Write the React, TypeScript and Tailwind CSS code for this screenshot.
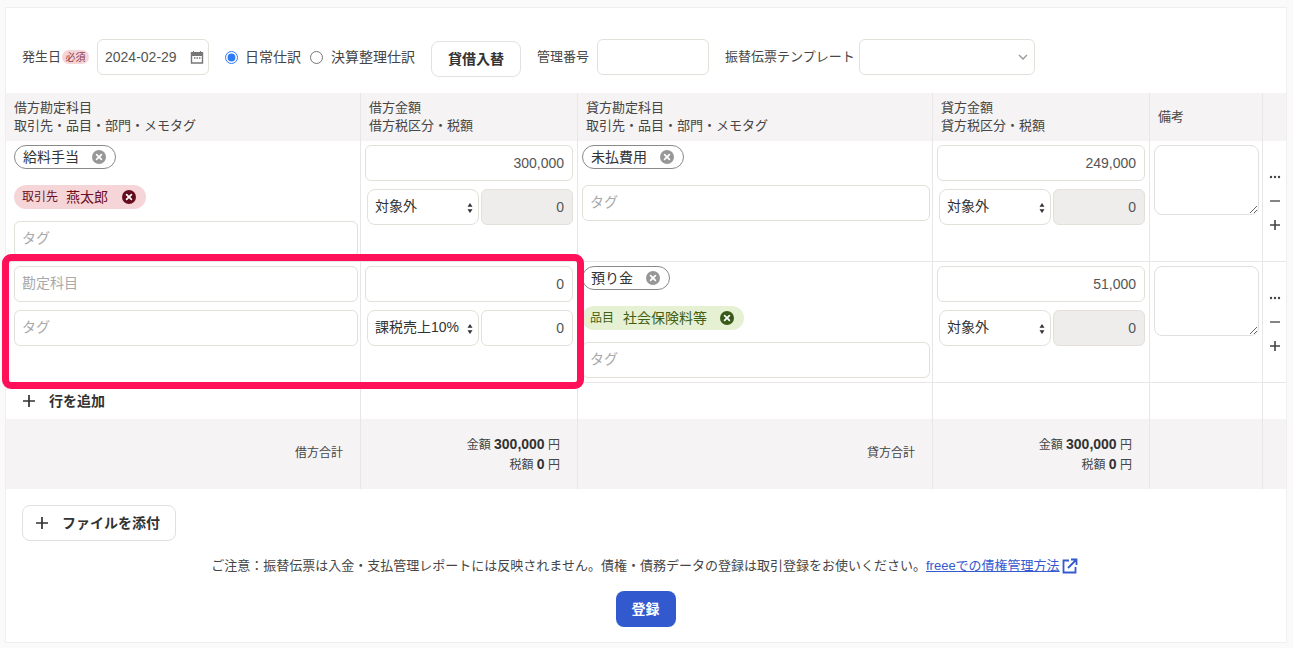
import React from "react";

const FONT = '"Liberation Sans", "Noto Sans CJK JP", sans-serif';

const inputCls =
  "h-9 rounded-md border border-[#e3e0d9] bg-white pl-[7px] pr-2 text-[14px] text-[#555] outline-none placeholder:text-[#a9a9a9]";
// Japanese placeholders sit a pixel higher than the digits
const tagCls = `${inputCls} pb-[2px]`;

function ClearIcon({ circle }: { circle: string }) {
  return (
    <svg width="14" height="14" viewBox="0 0 14 14" className="shrink-0">
      <circle cx="7" cy="7" r="7" fill={circle} />
      <path d="M4.6 4.6l4.8 4.8M9.4 4.6l-4.8 4.8" stroke="#fff" strokeWidth="1.7" strokeLinecap="round" />
    </svg>
  );
}

function Chip({ label, width }: { label: string; width: string }) {
  return (
    <div className={`flex h-6 items-center rounded-full border border-[#8a8a8a] bg-white pl-2 pr-[9px] text-[14px] text-[#323232] ${width}`}>
      <span>{label}</span>
      <span className="ml-auto">
        <ClearIcon circle="#979797" />
      </span>
    </div>
  );
}

function PartnerTag() {
  return (
    <div className="flex h-6 w-[132px] items-center rounded-full bg-[#f6d5d9] pl-2 pr-[10px] text-[#6c1022]">
      <span className="text-[12px]">取引先</span>
      <span className="ml-2 text-[14px]">燕太郎</span>
      <span className="ml-auto">
        <ClearIcon circle="#640d1e" />
      </span>
    </div>
  );
}

function ItemTag() {
  return (
    <div className="flex h-6 w-[162px] items-center rounded-full bg-[#e6f0d3] pl-2 pr-[10px] text-[#3f6014]">
      <span className="text-[12px]">品目</span>
      <span className="ml-[9px] text-[14px]">社会保険料等</span>
      <span className="ml-auto">
        <ClearIcon circle="#38591a" />
      </span>
    </div>
  );
}

function TaxSelect({ value }: { value: string }) {
  return (
    <div className="relative">
      <select
        defaultValue={value}
        className="h-9 w-[112px] appearance-none rounded-lg border border-[#e3e0d9] bg-white pb-[2px] pl-[7px] text-[14px] text-[#323232] outline-none"
      >
        <option>{value}</option>
      </select>
      <svg width="6" height="10" viewBox="0 0 6 10" className="pointer-events-none absolute right-[6px] top-[14px]">
        <path d="M3 0l2.5 3.8h-5zM3 10L.5 6.2h5z" fill="#333" />
      </svg>
    </div>
  );
}

function AmountInput({ value }: { value: string }) {
  return <input readOnly value={value} className={`${inputCls} w-[208px] text-right`} />;
}

function TaxRow({ label, tax, disabled }: { label: string; tax: string; disabled?: boolean }) {
  return (
    <div className="flex gap-[2px] pl-[2px]">
      <TaxSelect value={label} />
      <input
        readOnly
        value={tax}
        className={`h-9 w-[92px] rounded-md border border-[#e3e0d9] px-2 text-right text-[14px] text-[#555] outline-none ${
          disabled ? "bg-[#eeedeb]" : "bg-white"
        }`}
      />
    </div>
  );
}

function RowActions() {
  return (
    <div className="flex h-full flex-col items-center pt-[30px]">
      <svg width="12" height="12" viewBox="0 0 12 12">
        <circle cx="2" cy="6" r="1.2" fill="#444" />
        <circle cx="6" cy="6" r="1.2" fill="#444" />
        <circle cx="10" cy="6" r="1.2" fill="#444" />
      </svg>
      <svg width="12" height="12" viewBox="0 0 12 12" className="mt-3">
        <path d="M1 6h10" stroke="#666" strokeWidth="1.6" />
      </svg>
      <svg width="12" height="12" viewBox="0 0 12 12" className="mt-3">
        <path d="M1 6h10M6 1v10" stroke="#444" strokeWidth="1.6" />
      </svg>
    </div>
  );
}

function Plus() {
  return (
    <svg width="14" height="14" viewBox="0 0 14 14" className="shrink-0">
      <path d="M1 7h12M7 1v12" stroke="#323232" strokeWidth="1.7" />
    </svg>
  );
}

function Total({ amount, tax }: { amount: string; tax: string }) {
  return (
    <div className="flex h-full flex-col items-end justify-center gap-[3px] pr-[17px] text-[12px] leading-4 text-[#464646]">
      <span>
        金額 <b className="text-[14px] text-[#323232]">{amount}</b> 円
      </span>
      <span>
        税額 <b className="text-[14px] text-[#323232]">{tax}</b> 円
      </span>
    </div>
  );
}

const col = "border-r border-[#e8e6e6]";
const gridCls = "grid grid-cols-[355px_217px_355px_217px_113px_23px]";

export default function App() {
  return (
    <div className="relative min-h-[648px] bg-[#fafafa] pl-[5px] pr-[6px] pt-[7px]" style={{ fontFamily: FONT }}>
      <div className="h-[636px] border border-[#efefef] bg-white">
        {/* Top form */}
        <div className="flex h-[85px] items-start pl-[16px] pt-[31px] text-[13px] text-[#464646]">
          <div className="flex h-9 items-center">
            <span>発生日</span>
            <span className="ml-[1px] flex h-[14px] w-[27px] items-center justify-center rounded-full bg-[#f6d5d9] text-[10px] text-[#8c3a4a]">
              必須
            </span>
          </div>
          <div className="relative ml-2">
            <input readOnly value="2024-02-29" className={`${inputCls} w-[112px]`} />
            <svg width="14" height="14" viewBox="0 0 14 14" className="absolute right-[5px] top-[11px]">
              <path d="M1.5 3h11v10h-11z" fill="none" stroke="#777" strokeWidth="1.4" />
              <path d="M1.5 2.5h11v3h-11zM3.5 1v2M10.5 1v2" fill="#777" stroke="#777" />
              <path d="M4 8h1.5M6.5 8h1.5M9 8h1.5" stroke="#777" strokeWidth="1.5" />
            </svg>
          </div>
          <label className="ml-4 flex h-9 items-center gap-[7px] text-[14px]">
            <input type="radio" name="kind" defaultChecked className="h-[13px] w-[13px] accent-[#2f7bf5]" />
            日常仕訳
          </label>
          <label className="ml-[9px] flex h-9 items-center gap-[8px] text-[14px]">
            <input type="radio" name="kind" className="h-[13px] w-[13px]" />
            決算整理仕訳
          </label>
          <button className="ml-4 mt-[2px] h-9 w-[90px] rounded-lg border border-[#e2e2e2] bg-white text-[14px] font-bold text-[#323232]">
            貸借入替
          </button>
          <span className="ml-4 flex h-9 items-center">管理番号</span>
          <input readOnly className={`${inputCls} ml-2 w-[112px]`} />
          <span className="ml-4 flex h-9 items-center">振替伝票テンプレート</span>
          <div className="relative ml-1">
            <select className="h-9 w-[176px] appearance-none rounded-md border border-[#e3e0d9] bg-white outline-none" />
            <svg width="10" height="6" viewBox="0 0 10 6" className="absolute right-[7px] top-[15px]">
              <path d="M1 1l4 4 4-4" fill="none" stroke="#999" strokeWidth="1.4" />
            </svg>
          </div>
        </div>

        {/* Table header */}
        <div className={`${gridCls} h-12 bg-[#f5f3f3] text-[13px] leading-[18px] text-[#464646]`}>
          <div className={`${col} flex flex-col justify-center pl-2`}>
            <span>借方勘定科目</span>
            <span>取引先・品目・部門・メモタグ</span>
          </div>
          <div className={`${col} flex flex-col justify-center pl-2`}>
            <span>借方金額</span>
            <span>借方税区分・税額</span>
          </div>
          <div className={`${col} flex flex-col justify-center pl-2`}>
            <span>貸方勘定科目</span>
            <span>取引先・品目・部門・メモタグ</span>
          </div>
          <div className={`${col} flex flex-col justify-center pl-2`}>
            <span>貸方金額</span>
            <span>貸方税区分・税額</span>
          </div>
          <div className={`${col} flex items-center pl-2`}>備考</div>
          <div />
        </div>

        {/* Row 1 */}
        <div className={`${gridCls} h-[121px] border-b border-[#e8e6e6]`}>
          <div className={`${col} flex flex-col pl-2 pt-1`}>
            <Chip label="給料手当" width="w-[102px]" />
            <div className="mt-4">
              <PartnerTag />
            </div>
            <input readOnly placeholder="タグ" className={`${tagCls} mt-3 w-[344px]`} />
          </div>
          <div className={`${col} flex flex-col gap-2 pl-1 pt-1`}>
            <AmountInput value="300,000" />
            <TaxRow label="対象外" tax="0" disabled />
          </div>
          <div className={`${col} flex flex-col pl-1 pt-1`}>
            <Chip label="未払費用" width="w-[102px]" />
            <input readOnly placeholder="タグ" className={`${tagCls} mt-4 w-[348px]`} />
          </div>
          <div className={`${col} flex flex-col gap-2 pl-1 pt-1`}>
            <AmountInput value="249,000" />
            <TaxRow label="対象外" tax="0" disabled />
          </div>
          <div className={`${col} pl-1 pt-1`}>
            <textarea readOnly className="h-[70px] w-[105px] rounded-lg border border-[#e0e0e0] outline-none" />
          </div>
          <RowActions />
        </div>

        {/* Row 2 */}
        <div className={`${gridCls} h-[121px] border-b border-[#e8e6e6]`}>
          <div className={`${col} flex flex-col gap-2 pl-2 pt-1`}>
            <input readOnly placeholder="勘定科目" className={`${tagCls} w-[344px]`} />
            <input readOnly placeholder="タグ" className={`${tagCls} w-[344px]`} />
          </div>
          <div className={`${col} flex flex-col gap-2 pl-1 pt-1`}>
            <AmountInput value="0" />
            <TaxRow label="課税売上10%" tax="0" />
          </div>
          <div className={`${col} flex flex-col pl-1 pt-1`}>
            <Chip label="預り金" width="w-[88px]" />
            <div className="mt-4">
              <ItemTag />
            </div>
            <input readOnly placeholder="タグ" className={`${tagCls} mt-3 w-[348px]`} />
          </div>
          <div className={`${col} flex flex-col gap-2 pl-1 pt-1`}>
            <AmountInput value="51,000" />
            <TaxRow label="対象外" tax="0" disabled />
          </div>
          <div className={`${col} pl-1 pt-1`}>
            <textarea readOnly className="h-[70px] w-[105px] rounded-lg border border-[#e0e0e0] outline-none" />
          </div>
          <RowActions />
        </div>

        {/* Add row */}
        <div className={`${gridCls} h-9`}>
          <div className={`${col} flex items-center gap-[13px] pl-[16px] text-[14px] font-bold text-[#323232]`}>
            <Plus />
            行を追加
          </div>
          <div className={col} />
          <div className={col} />
          <div className={col} />
          <div className={col} />
          <div />
        </div>

        {/* Totals */}
        <div className={`${gridCls} h-[70px] bg-[#f5f3f3]`}>
          <div className={`${col} flex items-center justify-end pb-[3px] pr-[17px] text-[12px] text-[#464646]`}>借方合計</div>
          <div className={col}>
            <Total amount="300,000" tax="0" />
          </div>
          <div className={`${col} flex items-center justify-end pb-[3px] pr-[17px] text-[12px] text-[#464646]`}>貸方合計</div>
          <div className={col}>
            <Total amount="300,000" tax="0" />
          </div>
          <div className={col} />
          <div />
        </div>

        {/* Footer */}
        <div className="pl-[16px] pt-4">
          <button className="flex h-9 w-[154px] items-center gap-[13px] rounded-lg border border-[#e0e0e0] bg-white pl-3 text-[14px] font-bold text-[#323232]">
            <Plus />
            ファイルを添付
          </button>
        </div>
        <p className="mt-4 flex items-center justify-center pr-[3px] text-[13px] leading-[18px] text-[#464646]">
          ご注意：振替伝票は入金・支払管理レポートには反映されません。債権・債務データの登録は取引登録をお使いください。
          <a href="#" className="text-[#3559cf] underline">
            freeeでの債権管理方法
          </a>
          <svg width="16" height="16" viewBox="0 0 16 16" className="ml-[2px]">
            <path d="M7 2.5H1.5v12h12V9" fill="none" stroke="#3559cf" strokeWidth="1.8" />
            <path d="M6 10l8-8M9 1.5h5.5V7" fill="none" stroke="#3559cf" strokeWidth="1.8" />
          </svg>
        </p>
        <div className="mt-4 flex justify-center pr-[1px]">
          <button className="h-9 w-[60px] rounded-lg bg-[#3359cf] text-[14px] font-bold text-white">登録</button>
        </div>
      </div>

      {/* Highlight frame drawn over the second row */}
      <div className="pointer-events-none absolute left-[2px] top-[254px] h-[135px] w-[582px] rounded-[9px] border-[7px] border-[#ff1059]" />
    </div>
  );
}
